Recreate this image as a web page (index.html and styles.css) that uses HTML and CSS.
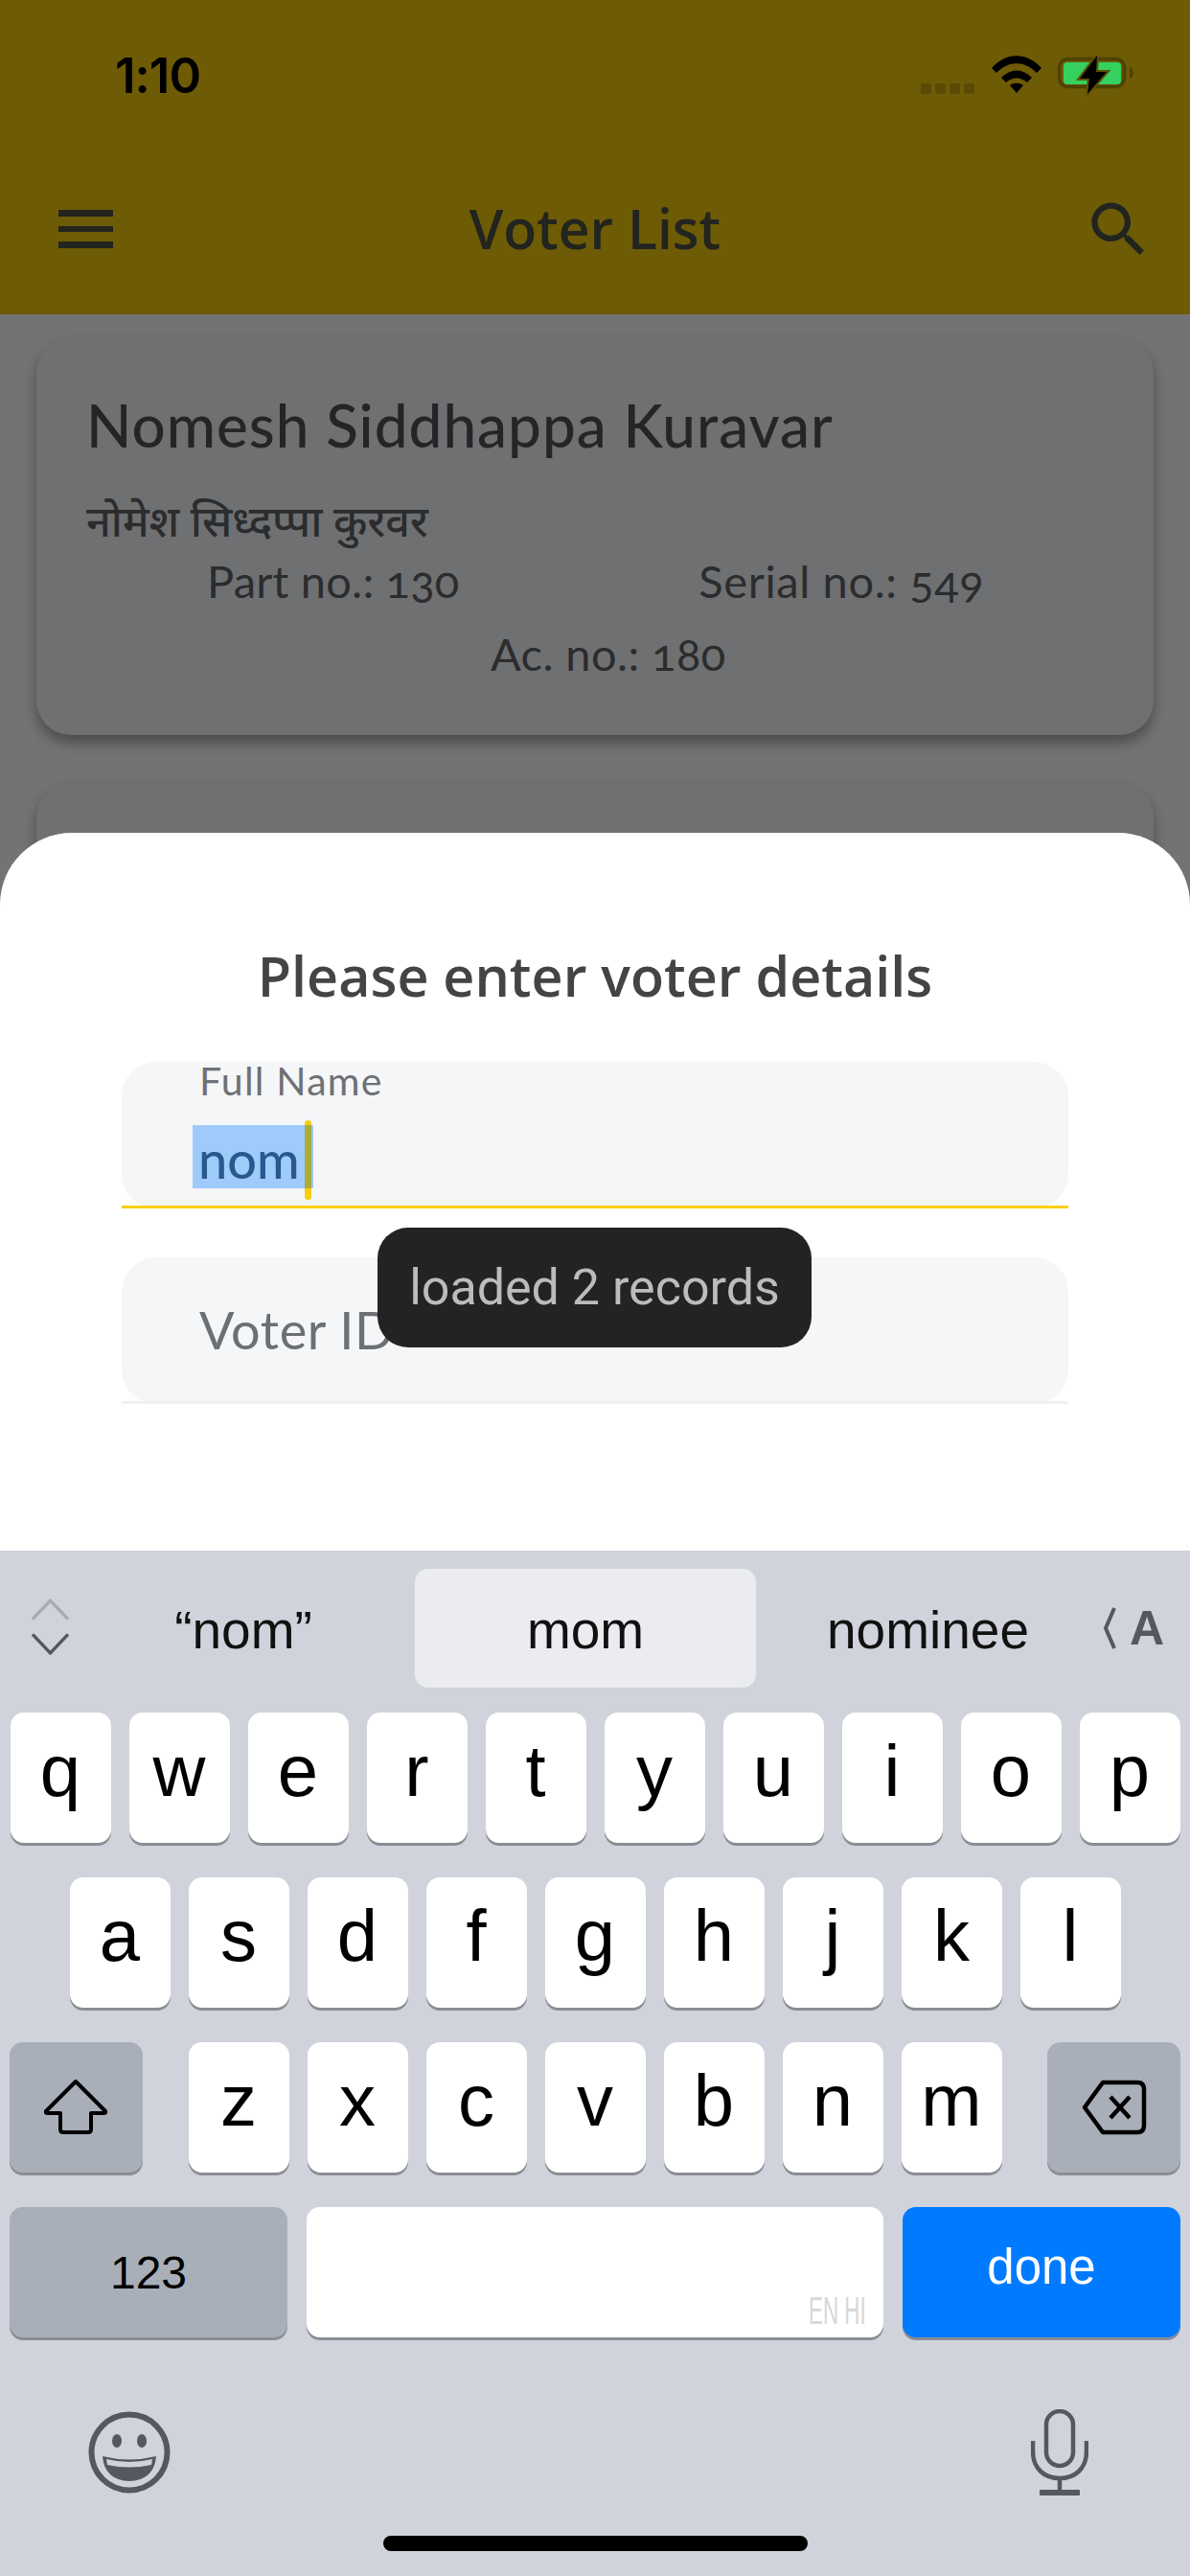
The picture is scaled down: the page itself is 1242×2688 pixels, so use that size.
FILE: index.html
```html
<!DOCTYPE html>
<html lang="en">
<head>
  <meta charset="UTF-8">
  <meta name="viewport" content="width=device-width, initial-scale=1.0">
  <title>Voter List</title>
  <link rel="stylesheet" href="styles.css">
</head>
<body>
  <div class="screen">
    <header class="header">
      <div class="status">
        <span class="time">1:10</span>
        <div class="status-icons">
          <div class="signal"><i></i><i></i><i></i><i></i></div>
          <svg class="wifi" viewBox="0 0 52 40">
            <path d="M0 13 C15 -4 37 -4 52 13 L47 18 C34 5 18 5 5 18 Z M10 23 C20 13 32 13 42 23 L37 28 C30 22 22 22 15 28 Z M19 31 C23 28 29 28 33 31 L26 39 Z" fill="#000"/>
          </svg>
          <svg class="battery" viewBox="0 0 82 42">
            <rect x="3.5" y="3.5" width="68" height="29" rx="9" fill="none" stroke="#4d4204" stroke-width="3.5"/>
            <rect x="8" y="7" width="60" height="23" rx="4" fill="#34d15f"/>
            <path d="M77 12 C82 13 82 23 77 24 Z" fill="#4d4204"/>
            <path d="M43 0 L25 24 L35 24 L33 40 L53 17 L42 17 Z" fill="#000" stroke="#5f5005" stroke-width="4" paint-order="stroke"/>
          </svg>
        </div>
      </div>
      <div class="toolbar">
        <div class="menu-icon"><i></i><i></i><i></i></div>
        <h1 class="title">Voter List</h1>
        <svg class="search-icon" viewBox="0 0 24 24">
          <path d="M15.5 14h-.79l-.28-.27C15.41 12.59 16 11.11 16 9.5 16 5.91 13.09 3 9.5 3S3 5.91 3 9.5 5.91 16 9.5 16c1.61 0 3.09-.59 4.23-1.57l.27.28v.79l5 4.99L20.49 19l-4.99-5zm-6 0C7.01 14 5 11.99 5 9.5S7.01 5 9.5 5 14 7.01 14 9.5 11.99 14 9.5 14z" fill="#22241f"/>
        </svg>
      </div>
    </header>

    <main class="list">
      <div class="card">
        <div class="name">Nomesh Siddhappa Kuravar</div>
        <div class="name-hi" lang="hi">नोमेश सिध्दप्पा कुरवर</div>
        <div class="meta-row">
          <span class="part">Part no.: 130</span>
          <span class="serial">Serial no.: 549</span>
        </div>
        <div class="ac">Ac. no.: 180</div>
      </div>
      <div class="card"></div>
    </main>

    <section class="sheet">
      <div class="form">
        <h2 class="sheet-title">Please enter voter details</h2>
        <div class="field active">
          <span class="field-label">Full Name</span>
          <div class="field-value"><span class="selected">nom</span><span class="cursor"></span></div>
        </div>
        <div class="field">
          <span class="field-hint">Voter ID</span>
        </div>
        <div class="toast">loaded 2 records</div>
      </div>

      <div class="keyboard">
        <div class="suggestions">
          <svg class="chevrons" viewBox="0 0 42 60">
            <path d="M2 22 L21 2 L40 22" fill="none" stroke="#a7abb3" stroke-width="3.5"/>
            <path d="M2 38 L21 58 L40 38" fill="none" stroke="#54575d" stroke-width="3.5"/>
          </svg>
          <div class="suggestion sug-left">“nom”</div>
          <div class="suggestion current">mom</div>
          <div class="suggestion sug-right">nominee</div>
          <div class="translate">
            <svg class="translate-chev" viewBox="0 0 15 46"><path d="M12 2 L3 23 L12 44" fill="none" stroke="#54585f" stroke-width="4"/></svg>
            <span>A</span>
          </div>
        </div>

        <div class="key-row">
          <div class="key">q</div><div class="key">w</div><div class="key">e</div><div class="key">r</div><div class="key">t</div><div class="key">y</div><div class="key">u</div><div class="key">i</div><div class="key">o</div><div class="key">p</div>
        </div>
        <div class="key-row">
          <div class="key">a</div><div class="key">s</div><div class="key">d</div><div class="key">f</div><div class="key">g</div><div class="key">h</div><div class="key">j</div><div class="key">k</div><div class="key">l</div>
        </div>
        <div class="key-row spread">
          <div class="key dark wide">
            <svg class="shift" viewBox="0 0 66 58"><path d="M33 2 L64 33 Q65 35 62 35 H49 V52 Q49 55 46 55 H20 Q17 55 17 52 V35 H4 Q1 35 2 33 Z" fill="none" stroke="#000" stroke-width="4" stroke-linejoin="round"/></svg>
          </div>
          <div class="letters">
            <div class="key">z</div><div class="key">x</div><div class="key">c</div><div class="key">v</div><div class="key">b</div><div class="key">n</div><div class="key">m</div>
          </div>
          <div class="key dark wide">
            <svg class="backspace" viewBox="0 0 68 58"><path d="M22 3 H58 Q65 3 65 10 V48 Q65 55 58 55 H22 L3 29 Z" fill="none" stroke="#000" stroke-width="4.5" stroke-linejoin="round"/><path d="M30 18 L50 40 M50 18 L30 40" stroke="#000" stroke-width="4.5"/></svg>
          </div>
        </div>
        <div class="key-row bottom-row">
          <div class="key dark num">123</div>
          <div class="key space"><span class="lang">EN HI</span></div>
          <div class="key done">done</div>
        </div>

        <div class="kb-bottom">
          <svg class="emoji" viewBox="0 0 86 86">
            <circle cx="43" cy="43" r="39.5" fill="none" stroke="#54585f" stroke-width="6"/>
            <ellipse cx="30" cy="31" rx="5" ry="7" fill="#54585f"/>
            <ellipse cx="56" cy="31" rx="5" ry="7" fill="#54585f"/>
            <path d="M15 47 Q43 54 71 47 Q69 72 43 73 Q17 72 15 47 Z" fill="#54585f"/>
            <path d="M19 50 Q43 56 67 50 L66 56 Q43 61 20 56 Z" fill="#d0d3db"/>
          </svg>
          <svg class="mic" viewBox="0 0 60 90">
            <rect x="16" y="2" width="28" height="57" rx="14" fill="none" stroke="#54585f" stroke-width="4.5"/>
            <path d="M2 33 V44 C2 62 14 72 30 72 C46 72 58 62 58 44 V33" fill="none" stroke="#54585f" stroke-width="4.5"/>
            <path d="M30 72 V86" stroke="#54585f" stroke-width="4.5"/>
            <rect x="9" y="84" width="42" height="6" rx="1" fill="#54585f"/>
          </svg>
        </div>
        <div class="home-bar"></div>
      </div>
    </section>
  </div>
</body>
</html>
```

FILE: styles.css
```css
* {
  box-sizing: border-box;
}
html, body {
  margin: 0;
  padding: 0;
}
body {
  font-family: "Open Sans", sans-serif;
  background-color: #737373;
}
.screen {
  position: relative;
  width: 1242px;
  height: 2688px;
  overflow: hidden;
  background-color: #737373;
}

/* header */
.header {
  height: 328px;
  background-color: #6e5b05;
}
.status {
  height: 150px;
  display: flex;
  justify-content: space-between;
  padding: 52px 58px 0 120px;
}
.time {
  font-family: Inter, sans-serif;
  font-weight: 600;
  font-size: 51px;
  line-height: 54px;
  letter-spacing: -1px;
  color: #000;
}
.status-icons {
  display: flex;
  align-items: flex-start;
  height: 50px;
}
.signal {
  display: flex;
  gap: 4px;
  margin-top: 35px;
  margin-right: 18px;
}
.signal i {
  width: 11px;
  height: 11px;
  border-radius: 3px;
  background: #5a4a05;
}
.wifi {
  width: 52px;
  height: 40px;
  margin-top: 6px;
  margin-right: 15px;
}
.battery {
  width: 82px;
  height: 42px;
  margin-top: 6px;
}
.toolbar {
  height: 178px;
  display: grid;
  grid-template-columns: 1fr auto 1fr;
  align-items: center;
  padding: 0 37px;
}
.menu-icon {
  display: flex;
  flex-direction: column;
  gap: 10px;
  width: 57px;
  margin-left: 24px;
}
.menu-icon i {
  height: 6.5px;
  background: #22241f;
}
.title {
  margin: 0;
  font-size: 57px;
  font-weight: 600;
  line-height: 74px;
  margin-top: -3px;
  color: #22241f;
}
.search-icon {
  width: 75px;
  height: 75px;
  justify-self: end;
}

/* voter cards */
.list {
  padding: 25px 38px 0;
}
.card {
  height: 414px;
  margin-bottom: 50px;
  padding: 55px 40px 0 52px;
  background-color: #6f7072;
  border-radius: 36px;
  box-shadow: 0 8px 14px rgba(0, 0, 0, 0.35);
  font-family: Lato, sans-serif;
  color: #242526;
}
.name {
  font-size: 62px;
  font-weight: 500;
  line-height: 70px;
  letter-spacing: 1px;
}
.name-hi {
  margin-top: 34px;
  font-family: "Noto Sans", "Noto Sans Devanagari", sans-serif;
  font-size: 45px;
  font-weight: 500;
  line-height: 62px;
  color: #2b2c2d;
}
.meta-row {
  display: flex;
  font-size: 47px;
  line-height: 60px;
  margin-top: 2px;
  letter-spacing: 0.2px;
  font-variant-numeric: oldstyle-nums;
  color: #2b2c2d;
}
.part {
  margin-left: 126px;
}
.serial {
  margin-left: 250px;
  letter-spacing: 0.6px;
}
.ac {
  margin-top: 16px;
  padding-left: 422px;
  font-size: 47px;
  line-height: 60px;
  letter-spacing: 0.4px;
  font-variant-numeric: oldstyle-nums;
  color: #2b2c2d;
}

/* bottom sheet */
.sheet {
  position: absolute;
  left: 0;
  right: 0;
  top: 869px;
  bottom: 0;
  display: flex;
  flex-direction: column;
  background: #fff;
  border-radius: 75px 75px 0 0;
  overflow: hidden;
}
.form {
  position: relative;
  height: 749px;
  padding: 0 127px;
}
.sheet-title {
  margin: 0;
  padding-top: 114px;
  height: 239px;
  text-align: center;
  white-space: nowrap;
  font-size: 57.4px;
  line-height: 70px;
  font-weight: 600;
  color: #434446;
}
.field {
  position: relative;
  height: 153px;
  margin-bottom: 51px;
  padding-left: 81px;
  background-color: #f5f6f8;
  border-radius: 36px;
  font-family: Lato, sans-serif;
}
.field::after {
  content: "";
  position: absolute;
  left: 0;
  right: 0;
  bottom: 0;
  height: 3px;
  background: #f0f1f2;
}
.field.active::after {
  background: #f9ce0c;
}
.field-label {
  display: block;
  font-size: 41px;
  line-height: 40px;
  letter-spacing: 1.2px;
  color: #6e7175;
}
.field-value {
  position: relative;
  margin-top: 26px;
  margin-left: -7px;
  width: 126px;
  height: 66px;
  background-color: #9fcbfb;
  font-size: 54px;
  font-weight: 500;
  line-height: 72px;
  padding-left: 6px;
  color: #29588f;
}
.cursor {
  position: absolute;
  left: 117px;
  top: -5px;
  width: 7px;
  height: 83px;
  border-radius: 4px;
  background: linear-gradient(#f9ce0c 5px, #a9ab3a 5px, #a9ab3a 71px, #f9ce0c 71px);
}
.field-hint {
  display: block;
  padding-top: 41px;
  font-size: 54px;
  line-height: 70px;
  letter-spacing: 0.6px;
  color: #6c7074;
}
.toast {
  position: absolute;
  left: 394px;
  top: 412px;
  width: 453px;
  height: 125px;
  display: flex;
  align-items: center;
  justify-content: center;
  background-color: #222322;
  border-radius: 32px;
  font-family: Roboto, sans-serif;
  font-size: 52px;
  color: #bcbcbc;
}

/* keyboard */
.keyboard {
  flex: 1;
  background-color: #d0d3db;
  font-family: "Liberation Sans", Arial, sans-serif;
}
.suggestions {
  height: 169px;
  padding-top: 19px;
  display: grid;
  grid-template-columns: 433px 356px 1fr;
  position: relative;
}
.suggestion {
  height: 124px;
  display: flex;
  align-items: center;
  justify-content: center;
  font-size: 55px;
  color: #111;
  padding-top: 4px;
}
.sug-left {
  padding-left: 75px;
}
.sug-right {
  padding-right: 94px;
}
.suggestion.current {
  background-color: #ebecf0;
  border-radius: 14px;
}
.chevrons {
  position: absolute;
  left: 32px;
  top: 50px;
  width: 41px;
  height: 59px;
}
.translate {
  position: absolute;
  left: 1151px;
  top: 58px;
  display: flex;
  align-items: center;
  gap: 13px;
  font-size: 50px;
  font-weight: 700;
  line-height: 46px;
  color: #54585f;
}
.translate-chev {
  width: 15px;
  height: 46px;
}
.key-row {
  display: flex;
  justify-content: center;
  gap: 19px;
  margin-bottom: 36px;
}
.key-row.spread {
  justify-content: space-between;
  padding: 0 10px;
  gap: 0;
}
.key-row.bottom-row {
  gap: 20px;
}
.letters {
  display: flex;
  gap: 19px;
}
.key {
  width: 105px;
  height: 136px;
  display: flex;
  align-items: center;
  justify-content: center;
  background: #fff;
  border-radius: 14px;
  box-shadow: 0 3px 0 #8b8d93;
  font-size: 76px;
  color: #000;
  padding-bottom: 16px;
}
.key.dark {
  background-color: #a9afb9;
}
.key.wide {
  width: 139px;
  padding-bottom: 0;
}
.key.num {
  width: 290px;
  font-size: 48px;
  padding-bottom: 0;
}
.key.space {
  position: relative;
  width: 602px;
}
.key.done {
  width: 290px;
  background-color: #007aff;
  color: #fff;
  font-size: 51px;
  padding-bottom: 12px;
}
.lang {
  position: absolute;
  right: 18px;
  bottom: 5px;
  font-size: 40px;
  line-height: 46px;
  color: #d8d8d8;
  transform: scaleX(0.56);
  transform-origin: right center;
}
.shift {
  width: 66px;
  height: 58px;
  margin-right: 2px;
}
.backspace {
  width: 68px;
  height: 58px;
}
.kb-bottom {
  display: flex;
  justify-content: space-between;
  align-items: center;
  height: 120px;
  padding: 0 106px 0 92px;
  margin-top: 60px;
}
.emoji {
  width: 86px;
  height: 86px;
}
.mic {
  width: 60px;
  height: 90px;
}
.home-bar {
  width: 443px;
  height: 16px;
  margin: 27px auto 0;
  border-radius: 8px;
  background: #000;
}
```
